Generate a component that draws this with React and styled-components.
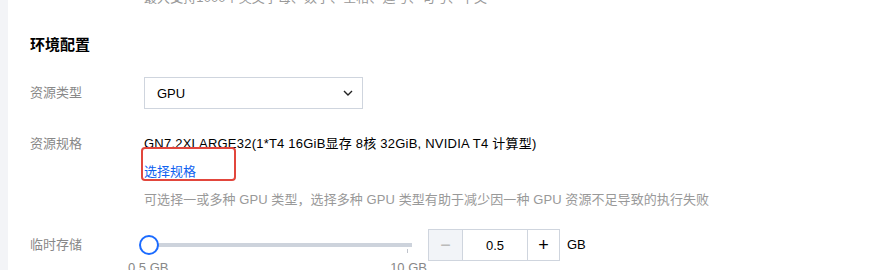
import React from "react";
import styled, { createGlobalStyle } from "styled-components";

const GlobalStyle = createGlobalStyle`
  html, body {
    margin: 0;
    padding: 0;
    background: #fff;
    font-family: "Liberation Sans", "Noto Sans CJK SC", sans-serif;
    font-size: 13px;
    color: #000;
  }
`;

const Page = styled.div`
  display: flex;
  height: 270px;
  overflow: hidden;
`;

const Strip = styled.div`
  width: 8px;
  flex-shrink: 0;
  background: #f3f4f7;
`;

const Main = styled.div`
  flex: 1;
  padding-left: 22px;
  margin-top: -12px;
`;

const Row = styled.div`
  display: flex;
  margin-top: ${({ gap }) => gap || 0}px;
`;

const Label = styled.div`
  width: 114px;
  flex-shrink: 0;
  color: #888;
  line-height: ${({ lh }) => lh || 20}px;
`;

const Control = styled.div`
  display: flex;
  flex-direction: column;
  align-items: flex-start;
`;

const Hint = styled.div`
  color: #999;
  line-height: 20px;
  letter-spacing: 0.08px;
  margin-top: ${({ gap }) => gap || 0}px;
`;

const Title = styled.h3`
  margin: 26px 0 0;
  font-size: 15px;
  font-weight: bold;
  line-height: 22px;
`;

const Select = styled.div`
  box-sizing: border-box;
  width: 219px;
  height: 32px;
  border: 1px solid #cfd5de;
  display: flex;
  align-items: center;
  justify-content: space-between;
  padding: 0 9px 0 12px;
`;

const Value = styled.div`
  line-height: 20px;
  letter-spacing: 0.22px;
`;

const LinkWrap = styled.div`
  position: relative;
  margin-top: 8px;
`;

const Link = styled.a`
  color: #0f62f0;
  line-height: 20px;
  text-decoration: none;
  display: block;
`;

const Mark = styled.div`
  position: absolute;
  left: -3px;
  top: -15px;
  width: 95px;
  height: 34px;
  box-sizing: border-box;
  border: 2px solid #e2463c;
  border-radius: 4px;
`;

const SliderLine = styled.div`
  display: flex;
  align-items: flex-start;
`;

const Slider = styled.div`
  margin-left: -5px;
  width: 273px;
`;

const TrackArea = styled.div`
  position: relative;
  height: 32px;
  display: flex;
  align-items: center;
`;

const Track = styled.div`
  position: relative;
  margin-left: 10px;
  flex: 1;
  height: 4px;
  background: #cdd3dc;
`;

const Tick = styled.div`
  position: absolute;
  right: 4px;
  top: 6px;
  width: 1px;
  height: 4px;
  background: #c0c4cc;
`;

const Thumb = styled.div`
  position: absolute;
  left: 0;
  top: 6px;
  width: 20px;
  height: 20px;
  box-sizing: border-box;
  border: 2px solid #1b6bff;
  border-radius: 50%;
  background: #fff;
`;

const Marks = styled.div`
  display: flex;
  justify-content: space-between;
  margin-left: -11px;
  width: 299px;
  color: #888;
  line-height: 20px;
  margin-top: -3px;
`;

const Stepper = styled.div`
  display: flex;
  margin-left: 16px;
  height: 32px;
`;

const StepBtn = styled.div`
  box-sizing: border-box;
  width: ${({ w }) => w}px;
  height: 32px;
  border: 1px solid #cfd5de;
  margin-left: ${({ first }) => (first ? 0 : -1)}px;
  display: flex;
  align-items: center;
  justify-content: center;
  background: ${({ disabled }) => (disabled ? "#f2f4f8" : "#fff")};
  color: ${({ disabled }) => (disabled ? "#bbb" : "#000")};
  font-size: ${({ big }) => (big ? 18 : 13)}px;
`;

const Unit = styled.div`
  margin-left: 7px;
  line-height: 32px;
`;

export default function App() {
  return (
    <Page>
      <GlobalStyle />
      <Strip />
      <Main>
        <Row>
          <Label />
          <Hint>最大支持1000个英文字母、数字、空格、逗号、句号、中文</Hint>
        </Row>
        <Title>环境配置</Title>
        <Row gap={21}>
          <Label lh={32}>资源类型</Label>
          <Select>
            <span>GPU</span>
            <svg width="10" height="6" viewBox="0 0 10 6">
              <polyline points="1,1 5,5 9,1" fill="none" stroke="#222" strokeWidth="1.4" />
            </svg>
          </Select>
        </Row>
        <Row gap={25}>
          <Label>资源规格</Label>
          <Control>
            <Value>GN7.2XLARGE32(1*T4 16GiB显存 8核 32GiB, NVIDIA T4 计算型)</Value>
            <LinkWrap>
              <Link href="#">选择规格</Link>
              <Mark />
            </LinkWrap>
            <Hint gap={8}>
              可选择一或多种 GPU 类型，选择多种 GPU 类型有助于减少因一种 GPU 资源不足导致的执行失败
            </Hint>
          </Control>
        </Row>
        <Row gap={19}>
          <Label lh={32}>临时存储</Label>
          <SliderLine>
            <Slider>
              <TrackArea>
                <Track>
                  <Tick />
                </Track>
                <Thumb />
              </TrackArea>
              <Marks>
                <span>0.5 GB</span>
                <span>10 GB</span>
              </Marks>
            </Slider>
            <Stepper>
              <StepBtn w={35} first disabled big>
                −
              </StepBtn>
              <StepBtn w={66}>0.5</StepBtn>
              <StepBtn w={33} big>
                +
              </StepBtn>
            </Stepper>
            <Unit>GB</Unit>
          </SliderLine>
        </Row>
      </Main>
    </Page>
  );
}
